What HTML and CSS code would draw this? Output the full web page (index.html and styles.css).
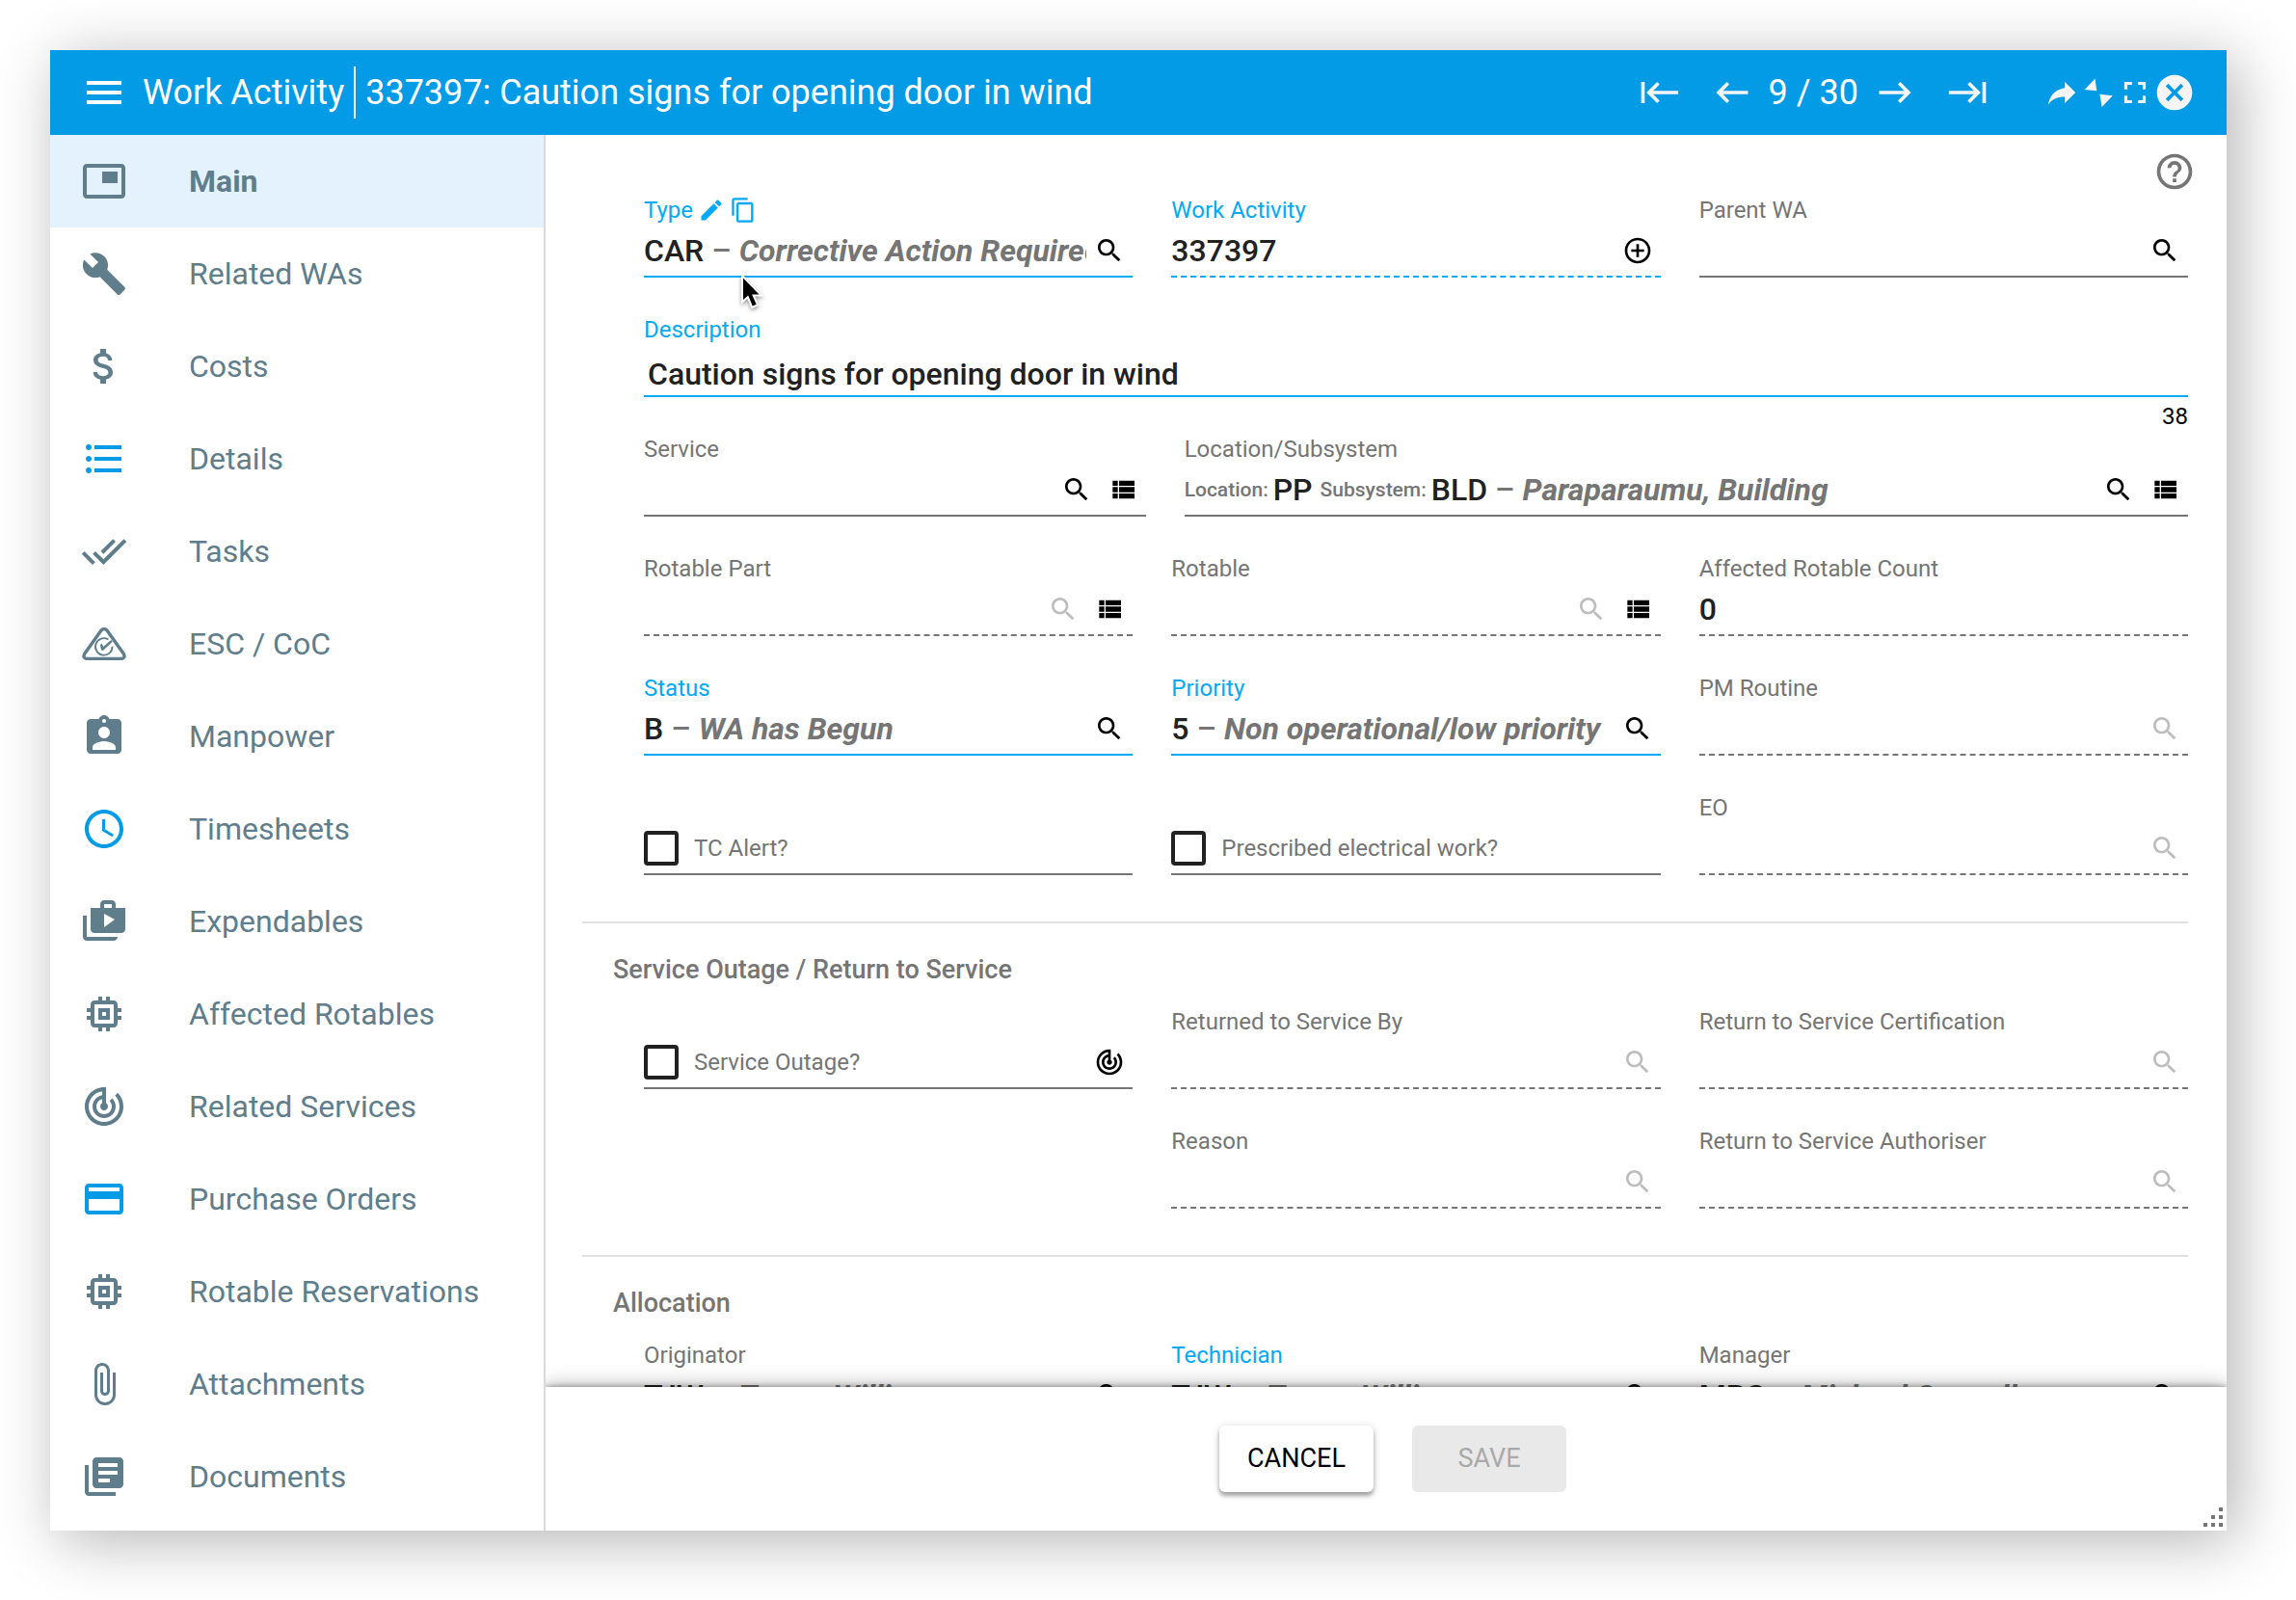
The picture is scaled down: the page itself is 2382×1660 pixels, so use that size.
FILE: index.html
```html
<!DOCTYPE html>
<html lang="en">
<head>
<meta charset="utf-8">
<title>Work Activity 337397</title>
<link rel="stylesheet" href="styles.css">
</head>
<body>
<svg class="sprite" aria-hidden="true">
  <symbol id="i-menu" viewBox="0 0 24 24"><path d="M3 18h18v-2H3v2zm0-5h18v-2H3v2zm0-7v2h18V6H3z"/></symbol>
  <symbol id="i-last" viewBox="0 0 24 24"><path d="M11.59 7.41L15.17 11H1v2h14.17l-3.59 3.59L13 18l6-6-6-6-1.41 1.41zM20 6v12h2V6h-2z"/></symbol>
  <symbol id="i-first" viewBox="0 0 24 24"><path d="M12.41 7.41L8.83 11H23v2H8.83l3.59 3.59L11 18l-6-6 6-6 1.41 1.41zM4 6v12H2V6h2z"/></symbol>
  <symbol id="i-prev" viewBox="0 0 24 24"><path d="M21 11H6.83l3.58-3.59L9 6l-6 6 6 6 1.41-1.41L6.83 13H21z"/></symbol>
  <symbol id="i-next" viewBox="0 0 24 24"><path d="M3 11h14.17l-3.58-3.59L15 6l6 6-6 6-1.41-1.41L17.17 13H3z"/></symbol>
  <symbol id="i-share" viewBox="0 0 24 24"><path d="M21 12l-7-7v4C7 10 4 15 3 20c2.500-3.500 6-5.100 11-5.100V19l7-7z"/></symbol>
  <symbol id="i-shrink" viewBox="0 0 38 38"><path d="M15.500 4.500L17.300 17.300 4.700 16zM20.400 20.700L33.800 22.300 22.600 34z"/></symbol>
  <symbol id="i-full" viewBox="0 0 24 24"><path d="M7 14H5v5h5v-2H7v-3zm-2-4h2V7h3V5H5v5zm12 7h-3v2h5v-5h-2v3zM14 5v2h3v3h2V5h-5z"/></symbol>
  <symbol id="i-close" viewBox="0 0 24 24"><path d="M12 2C6.470 2 2 6.470 2 12s4.470 10 10 10 10-4.470 10-10S17.530 2 12 2zm5 13.590L15.590 17 12 13.410 8.410 17 7 15.590 10.590 12 7 8.410 8.410 7 12 10.590 15.590 7 17 8.410 13.410 12 17 15.590z"/></symbol>
  <symbol id="i-help" viewBox="0 0 24 24"><path d="M11 18h2v-2h-2v2zm1-16C6.480 2 2 6.480 2 12s4.480 10 10 10 10-4.480 10-10S17.520 2 12 2zm0 18c-4.410 0-8-3.590-8-8s3.590-8 8-8 8 3.590 8 8-3.590 8-8 8zm0-14c-2.210 0-4 1.790-4 4h2c0-1.100.9-2 2-2s2 .9 2 2c0 2-3 1.750-3 5h2c0-2.250 3-2.500 3-5 0-2.210-1.790-4-4-4z"/></symbol>
  <symbol id="i-main" viewBox="0 0 24 24"><path d="M19 7h-8v6h8V7zm2-4H3c-1.100 0-2 .9-2 2v14c0 1.100.9 2 2 2h18c1.100 0 2-.9 2-2V5c0-1.100-.9-2-2-2zm0 16H3V5h18v14z"/></symbol>
  <symbol id="i-build" viewBox="0 0 24 24"><path d="M22.700 19l-9.100-9.100c.9-2.300.4-5-1.500-6.900-2-2-5-2.400-7.400-1.300L9 6 6 9 1.600 4.700C.4 7.100.9 10.100 2.900 12.100c1.900 1.900 4.600 2.400 6.900 1.500l9.100 9.100c.4.4 1 .4 1.400 0l2.300-2.300c.5-.4.5-1.100.1-1.400z"/></symbol>
  <symbol id="i-money" viewBox="0 0 24 24"><path d="M11.800 10.900c-2.270-.59-3-1.200-3-2.150 0-1.090 1.010-1.850 2.700-1.850 1.780 0 2.440.85 2.500 2.100h2.210c-.07-1.720-1.120-3.300-3.210-3.810V3h-3v2.160c-1.940.42-3.500 1.680-3.500 3.610 0 2.310 1.910 3.460 4.700 4.130 2.500.6 3 1.480 3 2.410 0 .69-.49 1.790-2.700 1.790-2.060 0-2.870-.92-2.980-2.100h-2.200c.12 2.190 1.760 3.420 3.680 3.830V21h3v-2.150c1.950-.37 3.500-1.500 3.500-3.550 0-2.840-2.430-3.810-4.700-4.400z"/></symbol>
  <symbol id="i-details" viewBox="0 0 24 24"><path d="M4 10.500c-.83 0-1.500.67-1.500 1.500s.67 1.500 1.500 1.500 1.500-.67 1.500-1.500-.67-1.500-1.500-1.500zm0-6c-.83 0-1.500.67-1.500 1.500S3.170 7.500 4 7.500 5.500 6.830 5.500 6 4.830 4.500 4 4.500zm0 12c-.83 0-1.500.68-1.500 1.500s.68 1.500 1.500 1.500 1.500-.68 1.500-1.500-.67-1.500-1.500-1.500zM7 19h14v-2H7v2zm0-6h14v-2H7v2zm0-8v2h14V5H7z"/></symbol>
  <symbol id="i-tasks" viewBox="0 0 24 24"><path d="M18 7l-1.410-1.410-6.340 6.340 1.410 1.410L18 7zm4.240-1.410L11.660 16.170 7.480 12l-1.410 1.410L11.660 19l12-12-1.420-1.410zM.41 13.410L6 19l1.410-1.410L1.830 12 .41 13.410z"/></symbol>
  <symbol id="i-esc" viewBox="0 0 24 24"><path d="M10.600 4.900Q12 3.600 13.400 4.900L22.300 17.400Q23 19.300 21.300 19.700H2.700Q1 19.300 1.700 17.400z" fill="none" stroke="currentColor" stroke-width="1.700" stroke-linejoin="round"/><path d="M14.200 9.700A4.400 4.400 0 1 0 16.300 13.400" fill="none" stroke="currentColor" stroke-width=".9"/><path d="M9.900 12.400l1-.4.700 1.500 4-3.500.8.900-5 4.600-.9-.3z"/></symbol>
  <symbol id="i-manpower" viewBox="0 0 24 24"><path d="M19 3h-4.180C14.400 1.840 13.300 1 12 1c-1.300 0-2.400.84-2.820 2H5c-1.100 0-2 .9-2 2v14c0 1.100.9 2 2 2h14c1.100 0 2-.9 2-2V5c0-1.100-.9-2-2-2zm-7 0c.55 0 1 .45 1 1s-.45 1-1 1-1-.45-1-1 .45-1 1-1zm0 4c1.660 0 3 1.340 3 3s-1.340 3-3 3-3-1.340-3-3 1.340-3 3-3zm6 12H6v-1.400c0-2 4-3.100 6-3.100s6 1.100 6 3.100V19z"/></symbol>
  <symbol id="i-time" viewBox="0 0 24 24"><path d="M11.990 2C6.470 2 2 6.480 2 12s4.470 10 9.990 10C17.520 22 22 17.520 22 12S17.520 2 11.990 2zM12 20c-4.420 0-8-3.580-8-8s3.580-8 8-8 8 3.580 8 8-3.580 8-8 8zm.5-13H11v6l5.250 3.150.75-1.230-4.500-2.670z"/></symbol>
  <symbol id="i-expend" viewBox="0 0 24 24"><path d="M3 9H1v11c0 1.110.89 2 2 2h14c1.110 0 2-.89 2-2H3V9zm15-4V3c0-1.110-.89-2-2-2h-4c-1.110 0-2 .89-2 2v2H5v11c0 1.110.89 2 2 2h14c1.110 0 2-.89 2-2V5h-5zm-6-2h4v2h-4V3zm0 12V8l5.500 3-5.500 4z"/></symbol>
  <symbol id="i-chip" viewBox="0 0 24 24"><path d="M15 9H9v6h6V9zm-2 4h-2v-2h2v2zm8-2V9h-2V7c0-1.100-.9-2-2-2h-2V3h-2v2h-2V3H9v2H7c-1.100 0-2 .9-2 2v2H3v2h2v2H3v2h2v2c0 1.100.9 2 2 2h2v2h2v-2h2v2h2v-2h2c1.100 0 2-.9 2-2v-2h2v-2h-2v-2h2zm-4 6H7V7h10v10z"/></symbol>
  <symbol id="i-track" viewBox="0 0 24 24"><path d="M19.070 4.930l-1.410 1.410C19.100 7.790 20 9.790 20 12c0 4.420-3.580 8-8 8s-8-3.580-8-8c0-4.080 3.050-7.440 7-7.930v2.020C8.160 6.570 6 9.030 6 12c0 3.310 2.690 6 6 6s6-2.690 6-6c0-1.660-.67-3.160-1.760-4.240l-1.410 1.410C15.550 9.900 16 10.900 16 12c0 2.210-1.790 4-4 4s-4-1.790-4-4c0-1.860 1.280-3.410 3-3.860v2.140c-.6.350-1 .98-1 1.720 0 1.100.9 2 2 2s2-.9 2-2c0-.74-.4-1.380-1-1.720V2h-1C6.480 2 2 6.480 2 12s4.480 10 10 10 10-4.480 10-10c0-2.760-1.120-5.260-2.930-7.070z"/></symbol>
  <symbol id="i-card" viewBox="0 0 24 24"><path d="M20 4H4c-1.110 0-1.990.89-1.990 2L2 18c0 1.110.89 2 2 2h16c1.110 0 2-.89 2-2V6c0-1.110-.89-2-2-2zm0 14H4v-6h16v6zm0-10H4V6h16v2z"/></symbol>
  <symbol id="i-attach" viewBox="0 0 24 24"><path d="M16.500 6v11.500c0 2.210-1.790 4-4 4s-4-1.790-4-4V5c0-1.380 1.120-2.500 2.500-2.500s2.500 1.120 2.500 2.500v10.500c0 .55-.45 1-1 1s-1-.45-1-1V6H10v9.500c0 1.380 1.120 2.500 2.500 2.500s2.500-1.120 2.500-2.500V5c0-2.210-1.790-4-4-4S7 2.790 7 5v12.500c0 3.040 2.460 5.500 5.500 5.500s5.500-2.460 5.500-5.500V6h-1.500z"/></symbol>
  <symbol id="i-docs" viewBox="0 0 24 24"><path d="M4 6H2v14c0 1.100.9 2 2 2h14v-2H4V6zm16-4H8c-1.100 0-2 .9-2 2v12c0 1.100.9 2 2 2h12c1.100 0 2-.9 2-2V4c0-1.100-.9-2-2-2zm-1 9H9V9h10v2zm-4 4H9v-2h6v2zm4-8H9V5h10v2z"/></symbol>
  <symbol id="i-search" viewBox="0 0 24 24"><path d="M15.500 14h-.79l-.28-.27C15.410 12.590 16 11.110 16 9.500 16 5.910 13.090 3 9.500 3S3 5.910 3 9.500 5.910 16 9.500 16c1.610 0 3.090-.59 4.230-1.570l.27.28v.79l5 4.990L20.490 19l-4.990-5zm-6 0C7.010 14 5 11.990 5 9.500S7.010 5 9.500 5 14 7.010 14 9.500 11.990 14 9.500 14z"/></symbol>
  <symbol id="i-list" viewBox="0 0 24 24"><path d="M4 14h4v-4H4v4zm0 5h4v-4H4v4zM4 9h4V5H4v4zm5 5h12v-4H9v4zm0 5h12v-4H9v4zM9 5v4h12V5H9z"/></symbol>
  <symbol id="i-add" viewBox="0 0 24 24"><path d="M13 7h-2v4H7v2h4v4h2v-4h4v-2h-4V7zm-1-5C6.490 2 2 6.490 2 12s4.490 10 10 10 10-4.490 10-10S17.510 2 12 2zm0 18c-4.410 0-8-3.590-8-8s3.590-8 8-8 8 3.590 8 8-3.590 8-8 8z"/></symbol>
  <symbol id="i-edit" viewBox="0 0 24 24"><path d="M3 17.250V21h3.750L17.810 9.940l-3.750-3.750L3 17.250zM20.710 7.040c.39-.39.39-1.020 0-1.410l-2.340-2.340c-.39-.39-1.020-.39-1.410 0l-1.830 1.830 3.750 3.750 1.830-1.830z"/></symbol>
  <symbol id="i-copy" viewBox="0 0 24 24"><path d="M16 1H4c-1.100 0-2 .9-2 2v14h2V3h12V1zm3 4H8c-1.100 0-2 .9-2 2v14c0 1.100.9 2 2 2h11c1.100 0 2-.9 2-2V7c0-1.100-.9-2-2-2zm0 16H8V7h11v14z"/></symbol>
</svg>

<div class="dialog">
  <header class="titlebar">
    <button class="icon-btn icon-48" aria-label="Menu"><svg><use href="#i-menu"/></svg></button>
    <h1 class="title"><span>Work Activity</span><span class="title-detail">337397: Caution signs for opening door in wind</span></h1>
    <nav class="pager" aria-label="Records">
      <button class="icon-btn icon-44" aria-label="First"><svg><use href="#i-first"/></svg></button>
      <div class="pager-step">
        <button class="icon-btn icon-44" aria-label="Previous"><svg><use href="#i-prev"/></svg></button>
        <span>9 / 30</span>
        <button class="icon-btn icon-44" aria-label="Next"><svg><use href="#i-next"/></svg></button>
      </div>
      <button class="icon-btn icon-44" aria-label="Last"><svg><use href="#i-last"/></svg></button>
    </nav>
    <div class="window-tools">
      <button class="icon-btn icon-38" aria-label="Share"><svg><use href="#i-share"/></svg></button>
      <button class="icon-btn icon-38" aria-label="Shrink"><svg><use href="#i-shrink"/></svg></button>
      <button class="icon-btn icon-38" aria-label="Full screen"><svg><use href="#i-full"/></svg></button>
      <button class="icon-btn icon-44" aria-label="Close"><svg><use href="#i-close"/></svg></button>
    </div>
  </header>

  <div class="columns">
    <nav class="sidebar" aria-label="Sections">
      <a class="side-link active" href="#main"><svg><use href="#i-main"/></svg>Main</a>
      <a class="side-link" href="#related-was"><svg><use href="#i-build"/></svg>Related WAs</a>
      <a class="side-link" href="#costs"><svg><use href="#i-money"/></svg>Costs</a>
      <a class="side-link has-data" href="#details"><svg><use href="#i-details"/></svg>Details</a>
      <a class="side-link" href="#tasks"><svg><use href="#i-tasks"/></svg>Tasks</a>
      <a class="side-link" href="#esc"><svg><use href="#i-esc"/></svg>ESC / CoC</a>
      <a class="side-link" href="#manpower"><svg><use href="#i-manpower"/></svg>Manpower</a>
      <a class="side-link has-data" href="#timesheets"><svg><use href="#i-time"/></svg>Timesheets</a>
      <a class="side-link" href="#expendables"><svg><use href="#i-expend"/></svg>Expendables</a>
      <a class="side-link" href="#rotables"><svg><use href="#i-chip"/></svg>Affected Rotables</a>
      <a class="side-link" href="#services"><svg><use href="#i-track"/></svg>Related Services</a>
      <a class="side-link has-data" href="#orders"><svg><use href="#i-card"/></svg>Purchase Orders</a>
      <a class="side-link" href="#reservations"><svg><use href="#i-chip"/></svg>Rotable Reservations</a>
      <a class="side-link" href="#attachments"><svg><use href="#i-attach"/></svg>Attachments</a>
      <a class="side-link" href="#documents"><svg><use href="#i-docs"/></svg>Documents</a>
    </nav>

    <main class="main" id="main">
      <form class="form" id="activity">
        <div class="help-row"><button type="button" class="icon-btn icon-44" aria-label="Help"><svg><use href="#i-help"/></svg></button></div>

        <section class="section">
          <div class="row">
            <div class="field required">
              <div class="label-row">
                <label for="type">Type</label>
                <button type="button" class="icon-btn icon-28" aria-label="Edit type"><svg><use href="#i-edit"/></svg></button>
                <button type="button" class="icon-btn icon-28" aria-label="Copy type"><svg><use href="#i-copy"/></svg></button>
              </div>
              <div class="control">
                <output class="value" id="type">CAR <span class="muted">– <em>Corrective Action Required</em></span></output>
                <button type="button" class="icon-btn icon-32" aria-label="Find type"><svg><use href="#i-search"/></svg></button>
              </div>
              <svg class="pointer" viewBox="0 0 32 44" aria-hidden="true"><path d="M7 6.500V29l5.200-4.500 4.500 11 4-1.700-4.600-10.300h7.400z"/></svg>
            </div>
            <div class="field required readonly">
              <label for="wa">Work Activity</label>
              <div class="control">
                <input class="value" id="wa" value="337397" readonly>
                <button type="button" class="icon-btn icon-32" aria-label="New work activity"><svg><use href="#i-add"/></svg></button>
              </div>
            </div>
            <div class="field">
              <label for="parent">Parent WA</label>
              <div class="control">
                <input class="value" id="parent">
                <button type="button" class="icon-btn icon-32" aria-label="Find parent"><svg><use href="#i-search"/></svg></button>
              </div>
            </div>
          </div>

          <div class="row row-full">
            <div class="field required">
              <label for="description">Description</label>
              <div class="control control-text"><input class="value" id="description" value="Caution signs for opening door in wind"></div>
              <span class="counter">38</span>
            </div>
          </div>

          <div class="row row-split">
            <div class="field">
              <label for="service">Service</label>
              <div class="control">
                <input class="value" id="service">
                <button type="button" class="icon-btn icon-32" aria-label="Find service"><svg><use href="#i-search"/></svg></button>
                <button type="button" class="icon-btn icon-32" aria-label="List services"><svg><use href="#i-list"/></svg></button>
              </div>
            </div>
            <div class="field">
              <label for="location">Location/Subsystem</label>
              <div class="control">
                <output class="value value-parts" id="location">
                  <span class="part"><small>Location:</small>PP</span>
                  <span class="part"><small>Subsystem:</small>BLD</span>
                  <span class="muted">– <em>Paraparaumu, Building</em></span>
                </output>
                <button type="button" class="icon-btn icon-32" aria-label="Find location"><svg><use href="#i-search"/></svg></button>
                <button type="button" class="icon-btn icon-32" aria-label="List locations"><svg><use href="#i-list"/></svg></button>
              </div>
            </div>
          </div>

          <div class="row">
            <div class="field readonly">
              <label for="rotable-part">Rotable Part</label>
              <div class="control">
                <input class="value" id="rotable-part" readonly>
                <button type="button" class="icon-btn icon-32" aria-label="Find rotable part" disabled><svg><use href="#i-search"/></svg></button>
                <button type="button" class="icon-btn icon-32" aria-label="List rotable parts"><svg><use href="#i-list"/></svg></button>
              </div>
            </div>
            <div class="field readonly">
              <label for="rotable">Rotable</label>
              <div class="control">
                <input class="value" id="rotable" readonly>
                <button type="button" class="icon-btn icon-32" aria-label="Find rotable" disabled><svg><use href="#i-search"/></svg></button>
                <button type="button" class="icon-btn icon-32" aria-label="List rotables"><svg><use href="#i-list"/></svg></button>
              </div>
            </div>
            <div class="field readonly">
              <label for="rotable-count">Affected Rotable Count</label>
              <div class="control"><input class="value" id="rotable-count" value="0" readonly></div>
            </div>
          </div>

          <div class="row">
            <div class="field required">
              <label for="status">Status</label>
              <div class="control">
                <output class="value" id="status">B <span class="muted">– <em>WA has Begun</em></span></output>
                <button type="button" class="icon-btn icon-32" aria-label="Find status"><svg><use href="#i-search"/></svg></button>
              </div>
            </div>
            <div class="field required">
              <label for="priority">Priority</label>
              <div class="control">
                <output class="value" id="priority">5 <span class="muted">– <em>Non operational/low priority</em></span></output>
                <button type="button" class="icon-btn icon-32" aria-label="Find priority"><svg><use href="#i-search"/></svg></button>
              </div>
            </div>
            <div class="field readonly">
              <label for="pm">PM Routine</label>
              <div class="control">
                <input class="value" id="pm" readonly>
                <button type="button" class="icon-btn icon-32" aria-label="Find PM routine" disabled><svg><use href="#i-search"/></svg></button>
              </div>
            </div>
          </div>

          <div class="row">
            <div class="field">
              <div class="control control-check"><input type="checkbox" id="tc"><label for="tc">TC Alert?</label></div>
            </div>
            <div class="field">
              <div class="control control-check"><input type="checkbox" id="pew"><label for="pew">Prescribed electrical work?</label></div>
            </div>
            <div class="field readonly">
              <label for="eo">EO</label>
              <div class="control">
                <input class="value" id="eo" readonly>
                <button type="button" class="icon-btn icon-32" aria-label="Find EO" disabled><svg><use href="#i-search"/></svg></button>
              </div>
            </div>
          </div>
        </section>

        <section class="section ruled">
          <h2 class="section-title">Service Outage / Return to Service</h2>
          <div class="row">
            <div class="field">
              <div class="control control-check">
                <input type="checkbox" id="outage"><label for="outage">Service Outage?</label>
                <button type="button" class="icon-btn icon-32" aria-label="Track service"><svg><use href="#i-track"/></svg></button>
              </div>
            </div>
            <div class="field readonly">
              <label for="returned-by">Returned to Service By</label>
              <div class="control">
                <input class="value" id="returned-by" readonly>
                <button type="button" class="icon-btn icon-32" aria-label="Find person" disabled><svg><use href="#i-search"/></svg></button>
              </div>
            </div>
            <div class="field readonly">
              <label for="certification">Return to Service Certification</label>
              <div class="control">
                <input class="value" id="certification" readonly>
                <button type="button" class="icon-btn icon-32" aria-label="Find certification" disabled><svg><use href="#i-search"/></svg></button>
              </div>
            </div>
          </div>
          <div class="row">
            <div class="field field-second readonly">
              <label for="reason">Reason</label>
              <div class="control">
                <input class="value" id="reason" readonly>
                <button type="button" class="icon-btn icon-32" aria-label="Find reason" disabled><svg><use href="#i-search"/></svg></button>
              </div>
            </div>
            <div class="field readonly">
              <label for="authoriser">Return to Service Authoriser</label>
              <div class="control">
                <input class="value" id="authoriser" readonly>
                <button type="button" class="icon-btn icon-32" aria-label="Find authoriser" disabled><svg><use href="#i-search"/></svg></button>
              </div>
            </div>
          </div>
        </section>

        <section class="section ruled">
          <h2 class="section-title">Allocation</h2>
          <div class="row">
            <div class="field">
              <label for="originator">Originator</label>
              <div class="control">
                <output class="value" id="originator">TJW <span class="muted">– <em>Trevor Willis</em></span></output>
                <button type="button" class="icon-btn icon-32" aria-label="Find originator"><svg><use href="#i-search"/></svg></button>
              </div>
            </div>
            <div class="field required">
              <label for="technician">Technician</label>
              <div class="control">
                <output class="value" id="technician">TJW <span class="muted">– <em>Trevor Willis</em></span></output>
                <button type="button" class="icon-btn icon-32" aria-label="Find technician"><svg><use href="#i-search"/></svg></button>
              </div>
            </div>
            <div class="field">
              <label for="manager">Manager</label>
              <div class="control">
                <output class="value" id="manager">MRC <span class="muted">– <em>Michael Connell</em></span></output>
                <button type="button" class="icon-btn icon-32" aria-label="Find manager"><svg><use href="#i-search"/></svg></button>
              </div>
            </div>
          </div>
        </section>
      </form>

      <footer class="actions">
        <button type="button" class="btn">CANCEL</button>
        <button type="submit" form="activity" class="btn" disabled>SAVE</button>
      </footer>
    </main>
  </div>

  <svg class="grip" viewBox="0 0 20 20" aria-hidden="true"><path d="M16 0h4v4h-4zM8 8h4v4H8zM16 8h4v4h-4zM0 16h4v4H0zM8 16h4v4H8zM16 16h4v4h-4z"/></svg>
</div>
</body>
</html>
```
FILE: styles.css
```css
*,
*::before,
*::after {
  box-sizing: border-box;
}

body {
  display: flex;
  height: 100vh;
  margin: 0;
  padding: 52px 72px 72px 52px;
  background: #fff;
  color: #212121;
  font-family: Roboto, "Liberation Sans", sans-serif;
  font-size: 32px;
}

button,
input {
  font: inherit;
  color: inherit;
}

svg {
  display: block;
  fill: currentColor;
}

.sprite {
  position: absolute;
  width: 0;
  height: 0;
}

.dialog {
  position: relative;
  display: flex;
  flex: 1;
  flex-direction: column;
  min-width: 0;
  background: #fff;
  box-shadow: 10px 10px 60px rgba(0, 0, 0, 0.3);
}

/* Icon buttons */

.icon-btn {
  flex: none;
  padding: 0;
  border: 0;
  background: none;
}

.icon-btn svg {
  width: 100%;
  height: 100%;
}

.icon-btn:disabled {
  color: #bdbdbd;
}

.icon-28 { width: 28px; height: 28px; }
.icon-32 { width: 32px; height: 32px; }
.icon-38 { width: 38px; height: 38px; }
.icon-44 { width: 44px; height: 44px; }
.icon-48 { width: 48px; height: 48px; }

/* Title bar */

.titlebar {
  display: flex;
  flex: none;
  align-items: center;
  height: 88px;
  padding: 0 32px;
  background: #039be5;
  color: #fff;
  font-size: 36px;
}

.title {
  display: flex;
  flex: 1;
  align-items: center;
  min-width: 0;
  margin: 0 0 0 16px;
  font-size: 36px;
  font-weight: 400;
  line-height: 54px;
  white-space: nowrap;
}

.title-detail {
  margin-left: 10px;
  padding-left: 10px;
  border-left: 2px solid #fff;
}

.pager {
  display: flex;
  align-items: center;
  gap: 32px;
}

.pager-step {
  display: flex;
  align-items: center;
  gap: 16px;
}

.window-tools {
  display: flex;
  align-items: center;
  margin-left: 56px;
}

.titlebar .icon-38,
.titlebar .icon-44 {
  color: #f5f5f5;
}

/* Sidebar */

.columns {
  display: flex;
  flex: 1;
  min-height: 0;
}

.sidebar {
  flex: none;
  width: 514px;
  overflow: hidden;
  border-right: 2px solid #dadada;
}

.side-link {
  display: flex;
  align-items: center;
  gap: 64px;
  height: 96px;
  padding-left: 32px;
  color: #607d8b;
  text-decoration: none;
}

.side-link svg {
  width: 48px;
  height: 48px;
}

.side-link.active {
  background: #e3f2fd;
  font-weight: 700;
}

.side-link.has-data svg {
  color: #039be5;
}

/* Form */

.main {
  display: flex;
  flex: 1;
  flex-direction: column;
  min-width: 0;
  overflow: hidden;
}

.form {
  flex: 1;
  min-height: 0;
  padding: 16px 40px 40px 38px;
  overflow-y: auto;
  scrollbar-width: none;
}

.help-row {
  display: flex;
  justify-content: flex-end;
  margin: 0 -8px 2px 0;
  color: #757575;
}

.section {
  display: flex;
  flex-direction: column;
  gap: 38px;
  padding-left: 64px;
}

.ruled {
  margin-top: 48px;
  border-top: 2px solid #e0e0e0;
  padding-top: 32px;
}

.section-title {
  margin: 0 0 -16px -32px;
  color: #757575;
  font-size: 27px;
  font-weight: 500;
  line-height: 32px;
}

.row {
  display: grid;
  grid-template-columns: repeat(3, 1fr);
  column-gap: 40px;
}

.row-full {
  grid-template-columns: 1fr;
}

.row-split {
  grid-template-columns: 1fr 2fr;
}

.field {
  position: relative;
  display: flex;
  flex-direction: column;
  justify-content: flex-end;
  min-width: 0;
}

.field-second {
  grid-column: 2;
}

.field label {
  color: #757575;
  font-size: 24px;
  line-height: 32px;
}

.field.required label,
.label-row {
  color: #03a9f4;
}

.label-row {
  display: flex;
  align-items: center;
  gap: 5px;
}

.control {
  display: flex;
  align-items: center;
  height: 54px;
  padding-right: 8px;
  border-bottom: 2px solid #757575;
  color: #000;
}

.required .control {
  border-color: #03a9f4;
}

.readonly .control {
  border-bottom-style: dashed;
}

.value {
  display: block;
  flex: 1;
  min-width: 0;
  height: 52px;
  margin-right: 8px;
  padding: 0;
  overflow: hidden;
  border: 0;
  outline: 0;
  background: none;
  color: #212121;
  font-size: 32px;
  font-weight: 500;
  line-height: 52px;
  white-space: nowrap;
}

.control-text .value {
  margin: 0;
  padding: 8px 4px 0;
}

.control .icon-btn + .icon-btn {
  margin-left: 16px;
}

.muted,
.value small {
  color: #757575;
}

.value em {
  font-weight: 700;
}

.value small {
  font-size: 21px;
}

.value-parts,
.part {
  display: flex;
  align-items: center;
}

.value-parts {
  gap: 8px;
}

.part {
  gap: 5px;
}

.control-check label {
  flex: 1;
}

.control-check input {
  width: 36px;
  height: 36px;
  margin: 0 16px 0 0;
  border: 4px solid #212121;
  border-radius: 4px;
  appearance: none;
}

.counter {
  position: absolute;
  top: 100%;
  right: 0;
  padding-top: 4px;
  color: #000;
  font-size: 24px;
  line-height: 32px;
}

.pointer {
  position: absolute;
  top: 80px;
  left: 96px;
  width: 32px;
  height: 44px;
  fill: #000;
  stroke: #fff;
  stroke-width: 4px;
  paint-order: stroke;
  filter: drop-shadow(0 2px 2px rgba(0, 0, 0, 0.4));
}

/* Footer */

.actions {
  position: relative;
  display: flex;
  flex: none;
  justify-content: center;
  gap: 40px;
  padding: 40px 40px 40px 54px;
  background: #fff;
  box-shadow: 0 0 6px rgba(0, 0, 0, 0.4), 0 0 20px rgba(0, 0, 0, 0.35);
}

.btn {
  width: 160px;
  height: 69px;
  padding: 0 0 2px;
  border: 0;
  border-radius: 6px;
  background: #fff;
  box-shadow: 0 4px 4px rgba(0, 0, 0, 0.3), 0 1px 8px rgba(0, 0, 0, 0.16);
  color: #000;
  font-size: 27px;
  font-weight: 400;
}

.btn:disabled {
  background: #e9e9e9;
  box-shadow: none;
  color: #a9a9a9;
}

.grip {
  position: absolute;
  right: 4px;
  bottom: 4px;
  width: 20px;
  height: 20px;
  color: #757575;
}
```
